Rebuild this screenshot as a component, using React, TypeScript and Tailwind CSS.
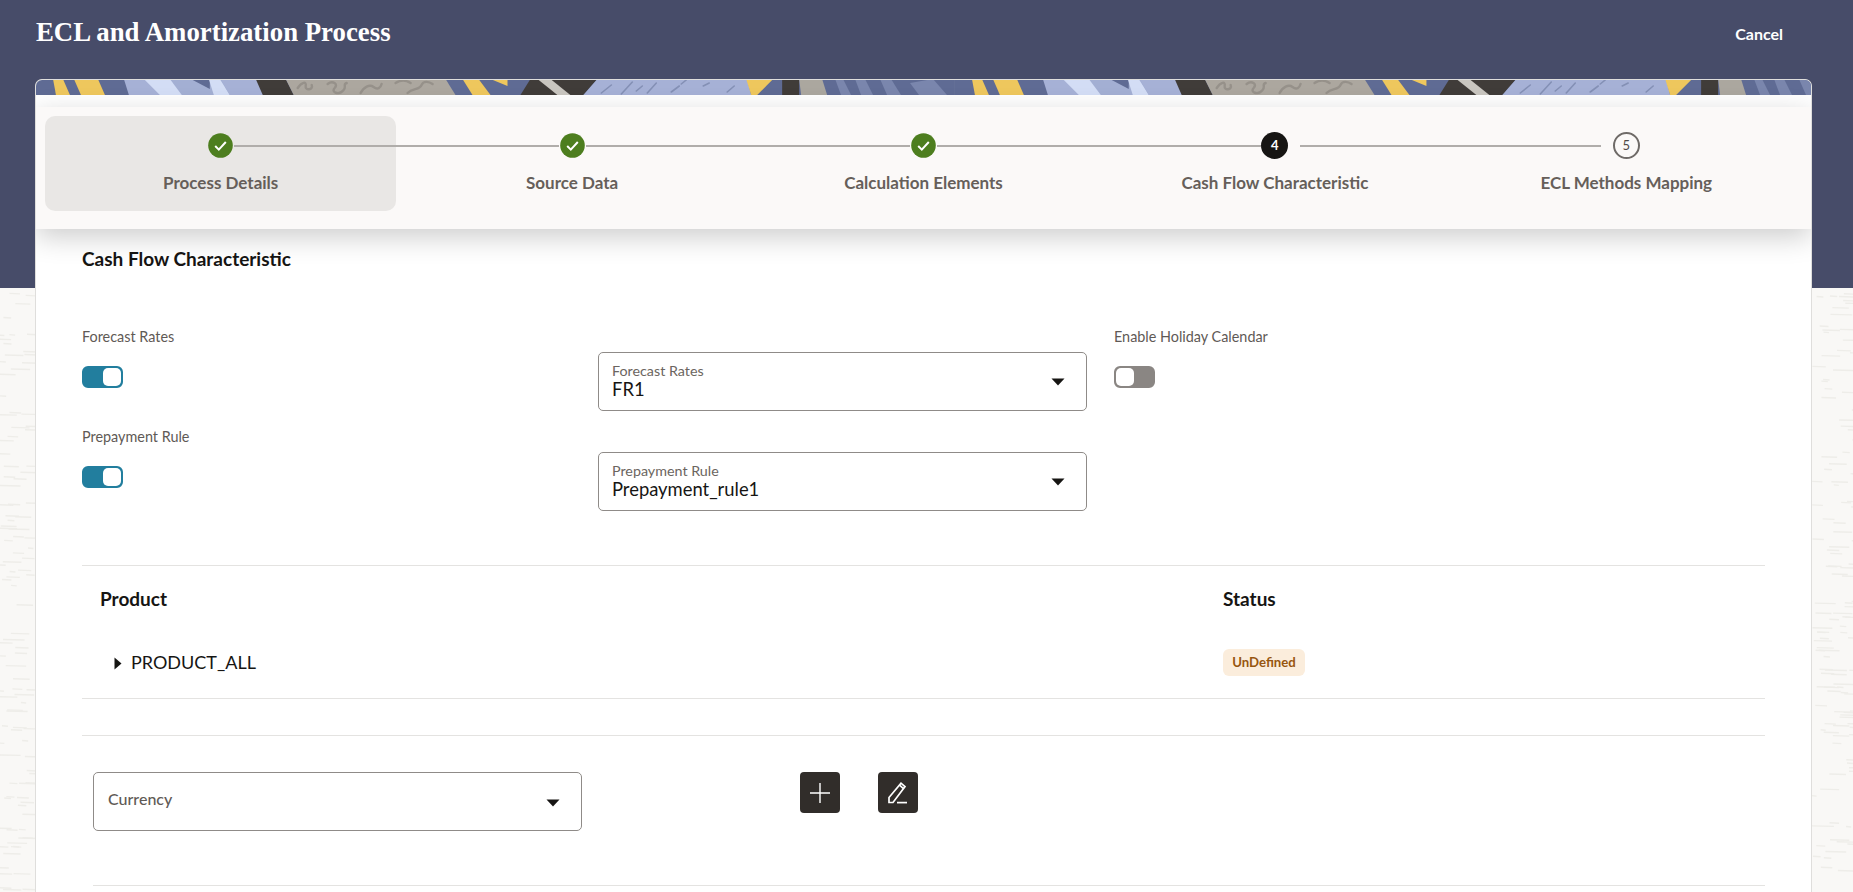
import React from "react";

const sans = "font-['Lato','Noto_Sans',sans-serif]";

function dashes() {
  let s = 12345;
  const r = () => (s = (s * 1103515245 + 12345) & 0x7fffffff) / 0x7fffffff;
  const out: { x: number; y: number; w: number }[] = [];
  for (let i = 0; i < 240; i++) {
    const left = r() < 0.47;
    const x = left ? r() * 36 - 6 : 1811 + r() * 46;
    out.push({ x, y: r() * 604, w: 5 + r() * 17 });
  }
  return out;
}

function Pattern() {
  return (
    <svg className="absolute left-0 top-[288px]" width="1853" height="604" aria-hidden="true">
      {dashes().map((d, i) => (
        <line key={i} x1={d.x} x2={d.x + d.w} y1={d.y} y2={d.y + 0.5} stroke="#eeede9" strokeWidth="1.4" />
      ))}
    </svg>
  );
}

function BannerTile() {
  return (
    <g id="tile">
      <rect x="0" y="0" width="920" height="16" fill="#5f6b94" />
      <polygon points="17,0 27,0 34,16 20,16" fill="#eec75d" />
      <polygon points="38,0 62,0 69,16 45,16" fill="#eec75d" />
      <polygon points="88,0 110,0 126,16 93,16" fill="#a6b1d6" />
      <polygon points="108,0 136,0 151,16 124,16" fill="#d3ddf5" />
      <polygon points="134,0 190,0 198,16 146,16" fill="#a3afd3" />
      <polygon points="155,0 174,0 174,10" fill="#5f6b94" />
      <polygon points="173,0 184,0 194,16 178,16" fill="#d3ddf5" />
      <polygon points="185,0 222,0 228,16 194,16" fill="#a6b1d6" />
      <polygon points="220,0 250,0 258,16 227,16" fill="#403c39" />
      <polygon points="250,0 410,0 420,16 258,16" fill="#aca79f" />
      <g fill="none" stroke="#96918a" strokeWidth="2.4" strokeLinecap="round">
        <path d="M262 9c4-6 9-7 8-2s8 4 6-1" />
        <path d="M292 5c5-4 11 0 7 4s4 8 9 2c3-3-1-6 3-7" />
        <path d="M325 14c3-6 9-9 13-6s7 1 8-3" />
        <path d="M360 4c6-4 12-2 15 0M372 14c5-5 12-3 14-8s8-3 11-1" />
      </g>
      <polygon points="427,0 443,0 455,16 437,16" fill="#eec75d" />
      <polygon points="455,0 472,0 472,7" fill="#eec75d" />
      <polygon points="495,0 562,0 548,16 485,16" fill="#403c39" />
      <polygon points="502,0 515,0 535,16 522,16" fill="#c9c6c0" />
      <polygon points="562,0 712,0 716,16 548,16" fill="#a6b1d6" />
      <g stroke="#8490b5" strokeWidth="1.6" strokeLinecap="round">
        <path d="M566 14l10-8M586 15l11-12M601 12l6-5M612 14l9-10M636 13l8-6M646 5l5-4M668 7l6-3M692 13l7-6" />
      </g>
      <polygon points="711,0 738,0 722,16 716,16" fill="#eec75d" />
      <polygon points="747,0 764,0 764,16 747,16" fill="#403c39" />
      <polygon points="764,0 787,0 792,16 766,16" fill="#aba79f" />
      <g fill="#7a86ad">
        <polygon points="800,0 808,0 816,16 806,16" />
        <polygon points="820,0 830,0 838,16 826,16" />
        <polygon points="845,0 856,0 866,16 852,16" />
        <polygon points="875,4 898,0 912,16 884,16" />
      </g>
    </g>
  );
}

function Banner() {
  return (
    <svg className="block h-[15px] w-full" viewBox="0 1 1777 15" preserveAspectRatio="none" aria-hidden="true">
      <BannerTile />
      <use href="#tile" x="920" />
    </svg>
  );
}

function Check() {
  return (
    <svg width="25" height="25" viewBox="0 0 25 25" aria-hidden="true">
      <circle cx="12.5" cy="12.5" r="12.3" fill="#4d7e1f" />
      <path d="M7.2 13l3.6 3.6 7-7.6" fill="none" stroke="#fff" strokeWidth="2" />
    </svg>
  );
}

type Step = { label: string; kind: "done" | "current" | "todo"; n?: number; left: string; right: string };

const steps: Step[] = [
  { label: "Process Details", kind: "done", left: "", right: "pl-px" },
  { label: "Source Data", kind: "done", left: "pr-px", right: "pl-px" },
  { label: "Calculation Elements", kind: "done", left: "pr-px", right: "pl-px" },
  { label: "Cash Flow Characteristic", kind: "current", n: 4, left: "", right: "pl-[12px]" },
  { label: "ECL Methods Mapping", kind: "todo", n: 5, left: "pr-[12px]", right: "" },
];

function Stepper() {
  return (
    <div className="relative z-10 h-[122px] bg-[#fbf9f8] pl-[9px] pt-[9px] shadow-[0_8px_26px_rgba(0,0,0,0.2)]">
      <div className="grid w-[1757px] grid-cols-5">
        {steps.map((s, i) => (
          <div key={s.label} className={`h-[95px] rounded-[10px] pt-[16px] ${i === 0 ? "bg-[#e9e7e5]" : ""}`}>
            <div className="grid h-[27px] grid-cols-[1fr_auto_1fr] items-center">
              <div className={s.left}>
                <div className={`h-[2px] ${i === 0 ? "" : "bg-[#b0adaa]"}`} />
              </div>
              {s.kind === "done" && <Check />}
              {s.kind === "current" && (
                <div className={`flex h-[27px] w-[27px] items-center justify-center rounded-full bg-[#161513] text-[13px] font-bold text-white ${sans}`}>4</div>
              )}
              {s.kind === "todo" && (
                <div className={`flex h-[27px] w-[27px] items-center justify-center rounded-full border-2 border-[#6f6b68] text-[13px] text-[#4f4a46] ${sans}`}>5</div>
              )}
              <div className={s.right}>
                <div className={`h-[2px] ${i === 4 ? "" : "bg-[#b0adaa]"}`} />
              </div>
            </div>
            <div className={`mt-[14px] text-center text-[17px] font-bold leading-[20px] text-[#665f5a] ${sans}`}>{s.label}</div>
          </div>
        ))}
      </div>
    </div>
  );
}

function Toggle({ on }: { on: boolean }) {
  return (
    <div className={`flex h-[22px] w-[41px] rounded-[6px] border-2 ${on ? "justify-end border-[#227e9e] bg-[#227e9e]" : "justify-start border-[#8a8683] bg-[#8a8683]"}`}>
      <div className="h-[18px] w-[18px] rounded-[5px] bg-white" />
    </div>
  );
}

function Caret() {
  return (
    <svg width="14" height="8" viewBox="0 0 14 8" aria-hidden="true">
      <polygon points="0.5,0.5 13.5,0.5 7,7.5" fill="#161513" />
    </svg>
  );
}

function Select({ label, value }: { label: string; value: string }) {
  return (
    <div className="flex h-[59px] w-[489px] items-center justify-between rounded-[5px] border border-[#8f8b88] bg-white pl-[13px] pr-[21px]">
      <div className={`${sans} -mt-[3px]`}>
        <div className="text-[14.3px] leading-[17px] text-[#6b6560]">{label}</div>
        <div className="text-[18.4px] leading-[20px] text-[#161513]">{value}</div>
      </div>
      <Caret />
    </div>
  );
}

function Hr({ cls = "" }: { cls?: string }) {
  return <div className={`h-px bg-[#e4e3e1] ${cls}`} />;
}

function IconBtn({ children }: { children: React.ReactNode }) {
  return <div className="flex h-[41px] w-[40px] items-center justify-center rounded-[4px] bg-[#312d2a]">{children}</div>;
}

function FieldLabel({ children }: { children: React.ReactNode }) {
  return <div className={`text-[14.4px] leading-[18px] text-[#5f5a56] ${sans}`}>{children}</div>;
}

export default function App() {
  return (
    <div className="relative h-[892px] w-[1853px] overflow-hidden bg-[#f9f8f6]">
      <Pattern />
      <div className="absolute inset-x-0 top-0 h-[288px] bg-[#474c69]" />
      <div className="relative">
        <div className="flex h-[79px] items-start justify-between pl-[36px] pr-[70px]">
          <h1 className="mt-[15px] text-[26.8px] font-bold leading-[34px] text-white font-['Liberation_Serif',serif]">ECL and Amortization Process</h1>
          <div className={`mt-[24px] text-[16px] font-bold leading-[20px] text-white ${sans}`}>Cancel</div>
        </div>
        <div className="ml-[35px] h-[813px] w-[1777px] overflow-hidden rounded-t-[7px] border-x border-t border-[#dfdedc] bg-white">
          <Banner />
          <div className="h-[12px]" />
          <Stepper />
          <div className="pl-[46px] pr-[46px]">
            <h2 className={`mt-[20px] text-[19px] font-bold leading-[20px] text-[#161513] ${sans}`}>Cash Flow Characteristic</h2>
            <div className="mt-[59px] grid grid-cols-[516px_489px_1fr]">
              <div>
                <FieldLabel>Forecast Rates</FieldLabel>
                <div className="mt-[20px]"><Toggle on /></div>
              </div>
              <div className="mt-[24px]"><Select label="Forecast Rates" value="FR1" /></div>
              <div className="pl-[27px]">
                <FieldLabel>Enable Holiday Calendar</FieldLabel>
                <div className="mt-[20px]"><Toggle on={false} /></div>
              </div>
            </div>
            <div className="mt-[17px] grid grid-cols-[516px_489px_1fr]">
              <div>
                <FieldLabel>Prepayment Rule</FieldLabel>
                <div className="mt-[20px]"><Toggle on /></div>
              </div>
              <div className="mt-[24px]"><Select label="Prepayment Rule" value="Prepayment_rule1" /></div>
            </div>
            <Hr cls="mt-[54px]" />
            <div className={`mt-[22px] grid grid-cols-[1123px_1fr] pl-[18px] text-[19px] font-bold leading-[22px] text-[#161513] ${sans}`}>
              <div>Product</div>
              <div>Status</div>
            </div>
            <div className="mt-[40px] grid h-[38px] grid-cols-[1123px_1fr] items-start pl-[18px]">
              <div className={`flex items-center text-[18px] leading-[24px] text-[#161513] ${sans}`}>
                <svg className="ml-[14px] mr-[9px] mt-[3px]" width="8" height="13" viewBox="0 0 8 13" aria-hidden="true">
                  <polygon points="0.5,0.5 7.5,6.5 0.5,12.5" fill="#161513" />
                </svg>
                PRODUCT_ALL
              </div>
              <div className={`-mt-[1px] flex h-[27px] w-[82px] items-center justify-center rounded-[6px] bg-[#fbeddc] text-[13.2px] font-bold text-[#97560f] ${sans}`}>UnDefined</div>
            </div>
            <Hr cls="mt-[10px]" />
            <Hr cls="mt-[36px]" />
            <div className="mt-[36px] flex items-start pl-[11px]">
              <div className="flex h-[59px] w-[489px] items-center justify-between rounded-[5px] border border-[#8f8b88] bg-white pl-[14px] pr-[21px]">
                <div className={`-mt-[5px] text-[16px] font-medium text-[#5f5a56] ${sans}`}>Currency</div>
                <div className="mt-[3px]"><Caret /></div>
              </div>
              <div className="ml-[218px] flex gap-[38px]">
                <IconBtn>
                  <svg width="22" height="22" viewBox="0 0 22 22" aria-hidden="true">
                    <path d="M11 1v20M1 11h20" stroke="#fff" strokeWidth="1.4" />
                  </svg>
                </IconBtn>
                <IconBtn>
                  <svg width="22" height="24" viewBox="0 0 22 24" aria-hidden="true">
                    <path d="M2 21.5v-5L14 2.2l4 3.4L6 21.5z" fill="none" stroke="#fff" strokeWidth="1.7" />
                    <path d="M12.5 4.2l4 3.4" stroke="#fff" strokeWidth="1.7" />
                    <path d="M10 21.6h10" stroke="#fff" strokeWidth="1.7" />
                  </svg>
                </IconBtn>
              </div>
            </div>
            <Hr cls="ml-[11px] mt-[54px]" />
          </div>
        </div>
      </div>
    </div>
  );
}
